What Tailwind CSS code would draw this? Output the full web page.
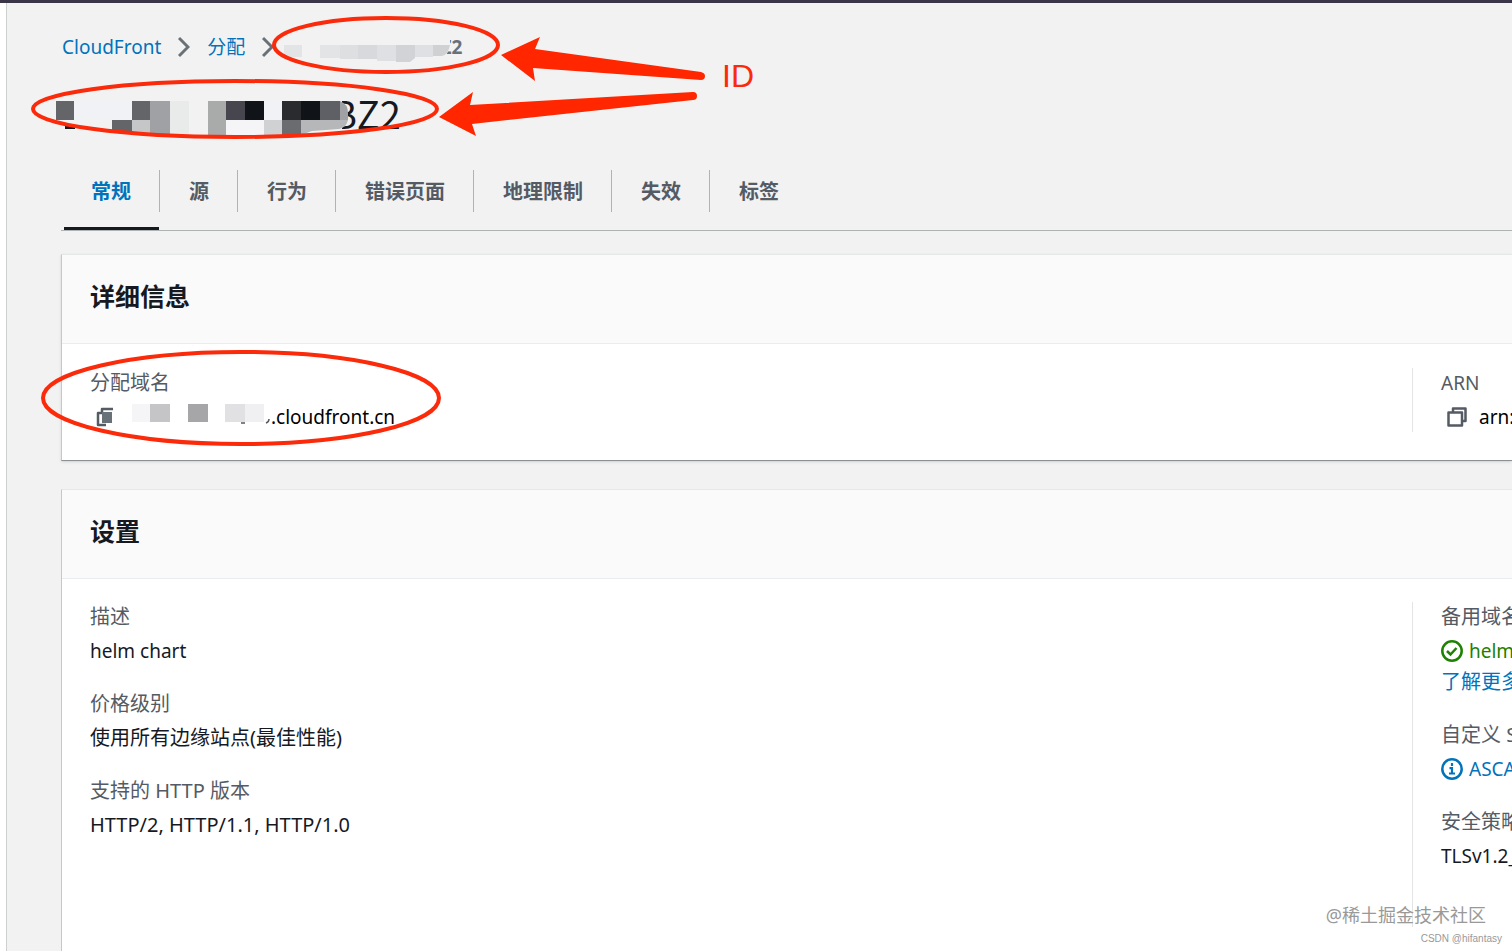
<!DOCTYPE html>
<html lang="zh-CN">
<head>
    <title>CloudFront 分配</title>
    <meta charset="UTF-8">
    <meta name="viewport" content="width=device-width, initial-scale=1.0">
    <script src="https://cdn.jsdelivr.net/npm/@tailwindcss/browser@4"></script>
</head>
<body class="relative flex min-h-screen flex-col overflow-x-hidden border-t-3 border-[#3a3548] bg-white pl-1.5 font-['Noto_Sans','Noto_Sans_CJK_SC',sans-serif] text-[20px] leading-[30px] text-[#16191f]">
    <main class="flex grow flex-col border-l border-[#cdd0d1] bg-[#f2f2f2] pl-[54px]">
        <nav aria-label="breadcrumb" class="flex h-[59px] items-end gap-[17px] pl-px text-[19px] whitespace-nowrap">
            <a href="#" class="text-[#0073bb]">CloudFront</a>
            <svg class="mb-1 h-[22px] w-3" viewBox="0 0 12 22" fill="none" stroke="#687078" stroke-width="3"><path d="M1 2l9 9-9 9"/></svg>
            <a href="#" class="text-[#0073bb]">分配</a>
            <svg class="mb-1 h-[22px] w-3" viewBox="0 0 12 22" fill="none" stroke="#687078" stroke-width="3"><path d="M1 2l9 9-9 9"/></svg>
            <span class="w-[218px] pr-[47px] text-right font-bold text-[#687078]">Z2</span>
        </nav>

        <h1 class="mt-[21px] pl-[271px] font-['Noto_Sans_CJK_SC',sans-serif] text-[38px] leading-[60px]">BZ2</h1>

        <!-- Abas -->
        <div role="tablist" class="mt-[27px] flex h-[61px] items-start border-b border-[#aeb3b4] pl-[3px] font-bold text-[#545b64]">
            <button role="tab" aria-selected="true" class="h-[60px] border-b-3 border-[#16191f] pr-7 pb-[13px] pl-[27px] text-[#0073bb]">常规</button>
            <button role="tab" class="h-[42px] border-l border-[#aeb3b4] pt-0.5 pr-7 pl-[29px]">源</button>
            <button role="tab" class="h-[42px] border-l border-[#aeb3b4] pt-0.5 pr-7 pl-[29px]">行为</button>
            <button role="tab" class="h-[42px] border-l border-[#aeb3b4] pt-0.5 pr-7 pl-[29px]">错误页面</button>
            <button role="tab" class="h-[42px] border-l border-[#aeb3b4] pt-0.5 pr-7 pl-[29px]">地理限制</button>
            <button role="tab" class="h-[42px] border-l border-[#aeb3b4] pt-0.5 pr-7 pl-[29px]">失效</button>
            <button role="tab" class="h-[42px] border-l border-[#aeb3b4] pt-0.5 pr-7 pl-[29px]">标签</button>
        </div>

        <section class="mt-[23px] border-t border-b border-l border-t-[#e6e8e8] border-b-[#8b9092] border-l-[#c5c8c9] bg-white shadow-sm">
            <h2 class="border-b border-[#eaeded] bg-[#fafafa] px-7 pt-6 pb-[29px] text-[25px] leading-[35px] font-bold">详细信息</h2>
            <div class="flex pt-6 pb-7">
                <dl class="grow pl-7">
                    <dt class="text-[#545b64]">分配域名</dt>
                    <dd class="mt-1 flex items-center text-[19px] text-black">
                        <button aria-label="复制" class="ml-1.5">
                            <svg class="size-5" viewBox="0 0 20 20" fill="none" stroke="#545b64" stroke-width="2.500" stroke-linejoin="round"><path d="M6 5V2h11M6 6H2v12h8"/><path d="M6 5h10v11H6z" fill="#687078" stroke="none"/></svg>
                        </button>
                        <span class="pl-[155px]">.cloudfront.cn</span>
                    </dd>
                </dl>
                <dl class="w-[100px] shrink-0 overflow-hidden border-l border-[#e3e5e5] pl-7 whitespace-nowrap">
                    <dt class="text-[19px] text-[#545b64]">ARN</dt>
                    <dd class="mt-1 flex items-center gap-3 text-[19px] text-black">
                        <button aria-label="复制" class="ml-1.5 shrink-0">
                            <svg class="size-5" viewBox="0 0 20 20" fill="none" stroke="#545b64" stroke-width="2.500" stroke-linejoin="round"><path d="M6 5V1.500h12.500V14H15"/><path d="M1.500 5.500H15v13H1.500z"/></svg>
                        </button>
                        <span>arn:aws-cn</span>
                    </dd>
                </dl>
            </div>
        </section>

        <section class="mt-7 flex grow flex-col border-t border-l border-t-[#e6e8e8] border-l-[#c5c8c9] bg-white">
            <h2 class="border-b border-[#eaeded] bg-[#fafafa] px-7 pt-6 pb-[29px] text-[25px] leading-[35px] font-bold">设置</h2>
            <div class="flex grow pt-[23px] pb-6">
                <div class="flex grow flex-col gap-[23px] pl-7">
                    <dl>
                        <dt class="text-[#545b64]">描述</dt>
                        <dd class="mt-1 text-[19px]">helm chart</dd>
                    </dl>
                    <dl>
                        <dt class="text-[#545b64]">价格级别</dt>
                        <dd class="mt-1">使用所有边缘站点(最佳性能)</dd>
                    </dl>
                    <dl>
                        <dt class="text-[#545b64]">支持的 HTTP 版本</dt>
                        <dd class="mt-1">HTTP/2, HTTP/1.1, HTTP/1.0</dd>
                    </dl>
                </div>
                <div class="flex w-[100px] shrink-0 flex-col gap-[23px] overflow-hidden border-l border-[#e3e5e5] pl-7 whitespace-nowrap">
                    <dl>
                        <dt class="text-[#545b64]">备用域名</dt>
                        <dd class="mt-1 flex items-center gap-1.5 text-[19px] text-[#1d8102]">
                            <svg class="size-[22px] shrink-0" viewBox="0 0 22 22" fill="none" stroke="currentColor" stroke-width="2.500"><circle cx="11" cy="11" r="9.700"/><path d="M6 11l3.500 3.500L15.500 8"/></svg>
                            helm.charts
                        </dd>
                        <dd class="mt-px"><a href="#" class="text-[#0073bb]">了解更多</a></dd>
                    </dl>
                    <dl>
                        <dt class="text-[#545b64]">自定义 SSL 证书</dt>
                        <dd class="mt-1 flex items-center gap-1.5 text-[19px] text-[#0073bb]">
                            <svg class="size-[22px] shrink-0" viewBox="0 0 22 22" fill="none" stroke="currentColor" stroke-width="2.500"><circle cx="11" cy="11" r="9.700"/><path d="M11 5v3M8.500 10.200H11v5M8 15.500h6" stroke-width="2.200"/></svg>
                            ASCATEST
                        </dd>
                    </dl>
                    <dl>
                        <dt class="text-[#545b64]">安全策略</dt>
                        <dd class="mt-1 text-[19px]">TLSv1.2_2018</dd>
                    </dl>
                </div>
            </div>
        </section>
    </main>

    <!-- Mosaicos e marcações em vermelho -->
    <svg class="pointer-events-none absolute -top-[3px] left-0 h-[460px] w-[800px]" viewBox="0 0 800 460" aria-hidden="true">
        <g>
            <path fill="#f2f2f2" d="M278 34h172v14l-5 9h-167z"/>
            <path fill="#e3e4e6" d="M284 45h18v12h-18z"/>
            <path fill="#e3e4e6" d="M320 45h20v13h-20z"/>
            <path fill="#dddfe1" d="M340 45h18v14h-18z"/>
            <path fill="#d8d9dc" d="M358 45h19v14h-19z"/>
            <path fill="#dfe0e3" d="M377 45h19v16h-19z"/>
            <path fill="#d1d3d7" d="M396 45h19v13l-5 4h-14z"/>
            <path fill="#dfe0e3" d="M415 45h18v12h-18z"/>
            <path fill="#cfd1d3" d="M433 45h17q-2 10-8 11h-9z"/>
        </g>
        <g>
            <path fill="#f2f2f2" d="M330 98h12v34h-12z"/>
            <path fill="#16191f" d="M65 126h10v3H65z"/>
            <path fill="#f0f2f5" d="M74 101h58v19H74zM264 101h18v19h-18z"/>
            <path fill="#646569" d="M56 101h18v19H56zM132 101h18v19h-18zM112 120h20v12h-20z"/>
            <path fill="#a0a1a4" d="M150 101h20v33h-20z"/>
            <path fill="#e9ebeb" d="M170 101h19v33h-19z"/>
            <path fill="#a9abab" d="M208 101h18v34h-18z"/>
            <path fill="#47464f" d="M226 101h19v19h-19z"/>
            <path fill="#101418" d="M245 101h19v19h-19zM301 101h19v19h-19z"/>
            <path fill="#292b2e" d="M282 101h19v19h-19z"/>
            <path fill="#5f5f66" d="M320 101h20v19h-20z"/>
            <path fill="#9fa1a4" d="M340 101q8 3 8 12v7h-8z"/>
            <path fill="#c4c6c8" d="M132 120h18v14h-18z"/>
            <path fill="#f5f5f8" d="M226 120h38v15h-38z"/>
            <path fill="#cfd1d3" d="M264 120h18v15h-18z"/>
            <path fill="#6b6c6f" d="M282 120h19v15h-19z"/>
            <path fill="#b5b7b9" d="M301 120h47q-2 8-9 9l-27 2-11 4z"/>
        </g>
        <g>
            <path fill="#f5f5f7" d="M132 404h18v18h-18z"/>
            <path fill="#c5c5c8" d="M150 404h20v18h-20z"/>
            <path fill="#a6a6a9" d="M188 404h20v18h-20z"/>
            <path fill="#e1e1e4" d="M225 404h20v18h-20z"/>
            <path fill="#f0f0f2" d="M245 404h19v18h-19z"/>
            <path fill="none" stroke="#545b64" stroke-width="1.500" d="M241 423h4M266 423q3-1 3-4"/>
        </g>
        <g fill="none" stroke="#fa2a0a" stroke-width="4">
            <ellipse cx="386" cy="45" rx="112" ry="27"/>
            <ellipse cx="235" cy="109" rx="202" ry="28"/>
            <ellipse cx="241" cy="398" rx="198" ry="46"/>
        </g>
        <g fill="#ff2600">
            <path d="M501 55l39-18-5 12 166 23q4 1 4 4 0 4-4 4L533 68l2 13z"/>
            <path d="M439 117l34-25-3 13 223-13q4 0 4 4t-4 4L472 124l4 12z"/>
        </g>
        <text x="722" y="87" font-size="32" fill="#fa2a0a" font-family="Liberation Sans, sans-serif">ID</text>
    </svg>

    <div class="pointer-events-none absolute right-2.5 bottom-0 flex flex-col items-end text-[#999999]">
        <span class="pr-4 text-[18px] leading-6">@稀土掘金技术社区</span>
        <span class="font-['Liberation_Sans',sans-serif] text-[10px] leading-6">CSDN @hifantasy</span>
    </div>
</body>
</html>
